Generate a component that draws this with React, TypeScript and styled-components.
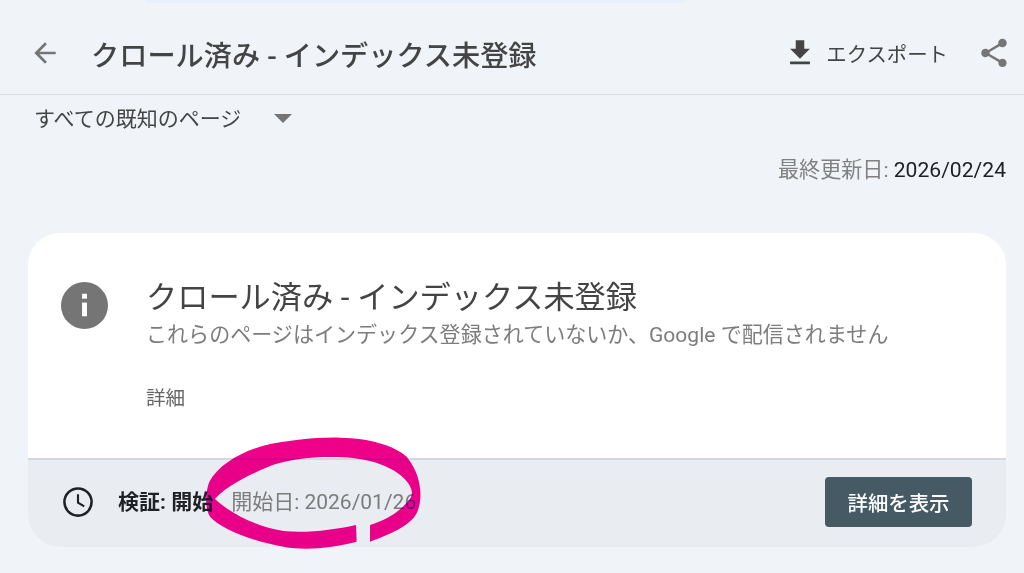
import React from "react";
import styled, { createGlobalStyle } from "styled-components";

const GlobalStyle = createGlobalStyle`
  html, body {
    margin: 0;
    padding: 0;
    background: #f0f4f9;
    font-family: Roboto, "Noto Sans CJK JP", sans-serif;
    overflow: hidden;
  }
`;

const Page = styled.div`
  position: relative;
  width: 1024px;
  height: 573px;
  overflow: hidden;
`;

const TopTab = styled.div`
  width: 540px;
  height: 3px;
  margin-left: 145px;
  background: #e8f0fe;
  border-radius: 0 0 8px 8px;
`;

const Header = styled.header`
  display: flex;
  align-items: center;
  height: 92px;
  padding: 9px 13px 0 29px;
  box-sizing: border-box;
  border-bottom: 1px solid #d9dde1;
`;

const IconSlot = styled.span`
  display: flex;
  flex: none;
`;

const Title = styled.h1`
  flex: 1;
  margin: 0 0 0 30px;
  font-size: 28.2px;
  font-weight: 500;
  color: #444;
`;

const ExportLabel = styled.span`
  margin: 0 29px 0 9px;
  font-size: 20.4px;
  color: #444;
`;

const Filter = styled.div`
  display: flex;
  align-items: center;
  height: 46px;
  padding: 0 0 2px 34px;
  box-sizing: border-box;
  font-size: 21px;
  color: #444;
`;

const Caret = styled.span`
  width: 0;
  height: 0;
  margin: 3px 0 0 33px;
  border-left: 9px solid transparent;
  border-right: 9px solid transparent;
  border-top: 9px solid #757575;
`;

const Updated = styled.div`
  margin-top: 14px;
  padding-right: 18px;
  text-align: right;
  font-size: 21.1px;
  line-height: 30px;
  color: #202124;
`;

const Muted = styled.span`
  color: #808080;
`;

const Card = styled.section`
  display: flex;
  flex-direction: column;
  width: 978px;
  height: 314px;
  margin: 48px 0 0 28px;
  border-radius: 32px;
  overflow: hidden;
  background: #fff;
`;

const CardBody = styled.div`
  display: flex;
  flex: 1;
  gap: 38px;
  padding: 49px 0 0 33px;
`;

const CardText = styled.div`
  display: flex;
  flex-direction: column;
  margin-top: -8px;
`;

const CardTitle = styled.h2`
  margin: 0;
  font-size: 31.2px;
  line-height: 47px;
  font-weight: 400;
  color: #444;
`;

const CardDesc = styled.p`
  margin: 0;
  font-size: 21.05px;
  line-height: 28px;
  color: #7c7c7c;
`;

const DetailLink = styled.span`
  margin-top: 37px;
  font-size: 19.6px;
  line-height: 26px;
  color: #666;
`;

const CardFooter = styled.footer`
  display: flex;
  align-items: center;
  height: 89px;
  padding: 0 34px 4px 33px;
  box-sizing: border-box;
  border-top: 2px solid #d3d6da;
  background: #e9ecf0;
`;

const Status = styled.strong`
  margin: 0 0 3px 23px;
  font-size: 21px;
  font-weight: 700;
  color: #202124;
`;

const StartDate = styled.span`
  flex: 1;
  margin: 0 0 3px 18px;
  font-size: 21px;
  color: #7c7c7c;
`;

const DetailButton = styled.button`
  width: 147px;
  height: 50px;
  border: 0;
  border-radius: 4px;
  background: #455a64;
  color: #fff;
  font: 500 20.4px Roboto, "Noto Sans CJK JP", sans-serif;
`;

const Scribble = styled.svg`
  position: absolute;
  left: 190px;
  top: 425px;
  width: 250px;
  height: 130px;
  mix-blend-mode: darken;
`;

const App: React.FC = () => (
  <Page>
    <GlobalStyle />
    <TopTab />
    <Header>
      <IconSlot>
        <svg width="32" height="32" viewBox="0 0 24 24" fill="#757575">
          <path d="M20 11H7.83l5.59-5.59L12 4l-8 8 8 8 1.41-1.41L7.83 13H20v-2z" />
        </svg>
      </IconSlot>
      <Title>クロール済み - インデックス未登録</Title>
      <IconSlot>
        <svg width="34" height="34" viewBox="0 0 24 24" fill="#444">
          <path d="M19 9h-4V3H9v6H5l7 7 7-7zM5 18v2h14v-2H5z" />
        </svg>
      </IconSlot>
      <ExportLabel>エクスポート</ExportLabel>
      <IconSlot>
        <svg width="34" height="34" viewBox="0 0 24 24" fill="#757575">
          <path d="M18 16.08c-.76 0-1.44.3-1.96.77L8.91 12.7c.05-.23.09-.46.09-.7s-.04-.47-.09-.7l7.05-4.11c.54.5 1.25.81 2.04.81 1.66 0 3-1.34 3-3s-1.34-3-3-3-3 1.34-3 3c0 .24.04.47.09.7L8.04 9.81C7.5 9.31 6.79 9 6 9c-1.66 0-3 1.34-3 3s1.34 3 3 3c.79 0 1.5-.31 2.04-.81l7.12 4.16c-.05.21-.08.43-.08.65 0 1.61 1.31 2.92 2.92 2.92 1.61 0 2.92-1.31 2.92-2.92s-1.31-2.92-2.92-2.92z" />
        </svg>
      </IconSlot>
    </Header>
    <Filter>
      すべての既知のページ
      <Caret />
    </Filter>
    <Updated>
      <Muted>最終更新日:</Muted> 2026/02/24
    </Updated>
    <Card>
      <CardBody>
        <IconSlot>
          <svg width="47" height="47" viewBox="0 0 48 48">
            <circle cx="24" cy="24" r="24" fill="#757575" />
            <rect x="21.5" y="21" width="5" height="14" fill="#fff" />
            <rect x="21.5" y="12" width="5" height="5" fill="#fff" />
          </svg>
        </IconSlot>
        <CardText>
          <CardTitle>クロール済み - インデックス未登録</CardTitle>
          <CardDesc>これらのページはインデックス登録されていないか、Google で配信されません</CardDesc>
          <DetailLink>詳細</DetailLink>
        </CardText>
      </CardBody>
      <CardFooter>
        <IconSlot>
          <svg width="34" height="34" viewBox="0 0 24 24" fill="none" stroke="#202124" strokeWidth="1.8">
            <circle cx="12" cy="12" r="9.6" />
            <path d="M12 6.5V12.5l4.4 2.6" strokeWidth="1.5" />
          </svg>
        </IconSlot>
        <Status>検証: 開始</Status>
        <StartDate>開始日: 2026/01/26</StartDate>
        <DetailButton>詳細を表示</DetailButton>
      </CardFooter>
    </Card>
    <Scribble viewBox="0 0 750 390">
      <path
        fill="#ee0088"
        d="M540 350C610 325 672 295 684 255C698 215 695 150 650 95C610 60 540 40 450 38C380 36 290 46 220 62C150 82 85 120 58 170C45 205 45 250 60 275C90 310 190 350 280 365C350 378 430 368 500 350L498 300C430 315 350 325 280 318C200 305 120 265 75 222C100 190 170 150 255 118C315 100 375 94 440 96C530 98 600 120 640 158C665 182 672 205 660 222C630 260 590 285 540 300Z"
      />
    </Scribble>
  </Page>
);

export default App;
